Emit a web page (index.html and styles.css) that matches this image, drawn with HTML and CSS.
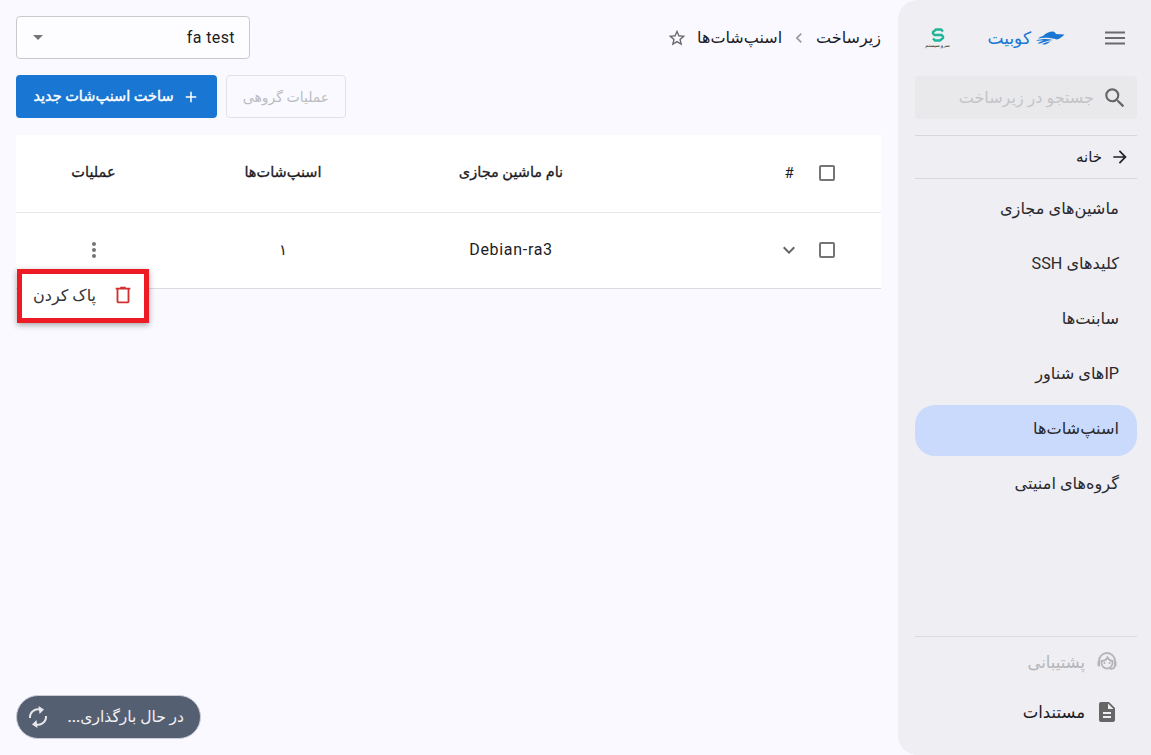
FILE: index.html
```html
<!DOCTYPE html>
<html dir="rtl">
<head>
<meta charset="utf-8">
<meta name="viewport" content="width=device-width, initial-scale=1">
<link rel="stylesheet" href="styles.css">
</head>
<body>

<div class="page">
  <aside class="sidebar">
    <div class="brand-row">
      <svg class="burger" width="20" height="14" viewBox="0 0 20 14"><path d="M0 1.500h20M0 7h20M0 12.500h20" stroke="#6b6b6f" stroke-width="2"/></svg>
      <div class="brand">
        <svg width="30" height="14" viewBox="0 0 30 14"><path d="M8 5C11 2 14 .5 18 .5c1.500 0 2 1 3 2.500l8.500 .5C27 6 25 7.500 22 8.500 16 6.500 9 6 3 7.500 4 6.500 6 5.500 8 5z" fill="#1976d2"/><path d="M1 9.500c6-2 12-2 17-.5-5 .5-10 2-13 3.500H2.500C4 11 7 10 9 9.500 6 9.500 3 10 1 9.500zM7 13c3-1.500 6-2.500 9-3-2 1.500-4 3-6 3.500-1 0-2 0-3-.5z" fill="#1976d2"/></svg>
        <span>کوبیت</span>
      </div>
      <div class="partner">
        <svg width="14" height="14" viewBox="0 0 14 14"><path d="M12 3.500L10 1.500H5L2 4v1.500L3.500 7h7L12 8.500V10l-3 2.500H4L2 10.500" fill="none" stroke="#1fb596" stroke-width="2.400"/></svg>
        <span>سرو سیستم</span>
      </div>
    </div>

    <div class="search">
      <svg width="26" height="26" viewBox="0 0 24 24"><path fill="#666" d="M15.500 14h-.79l-.28-.27A6.470 6.470 0 0 0 16 9.500 6.500 6.500 0 1 0 9.500 16c1.610 0 3.090-.59 4.230-1.570l.27.28v.79l5 4.990L20.490 19l-4.990-5zm-6 0C7.010 14 5 11.990 5 9.500S7.010 5 9.500 5 14 7.010 14 9.500 11.990 14 9.500 14z"/></svg>
      <span>جستجو در زیرساخت</span>
    </div>

    <div class="home">
      <svg width="20" height="20" viewBox="0 0 24 24"><path fill="#222" d="M12 4l-1.410 1.410L16.170 11H4v2h12.170l-5.580 5.590L12 20l8-8z"/></svg>
      <span>خانه</span>
    </div>

    <nav class="nav">
      <a class="nav-item">ماشین‌های مجازی</a>
      <a class="nav-item">کلیدهای SSH</a>
      <a class="nav-item">سابنت‌ها</a>
      <a class="nav-item">IPهای شناور</a>
      <a class="nav-item active">اسنپ‌شات‌ها</a>
      <a class="nav-item">گروه‌های امنیتی</a>
    </nav>

    <div class="side-foot">
      <div class="foot-item muted">
        <svg width="24" height="24" viewBox="0 0 24 24"><path fill="none" stroke="#b5b5b8" stroke-width="1.800" d="M4 14v-3a8 8 0 0 1 16 0v3M6.500 11c3 0 5-1.500 6-3.500 1 1.800 3 3.500 5 3.500v2a5.500 5.500 0 0 1-11 0zM20 15c0 2.500-2 4-5 4"/><circle cx="9.500" cy="13" r="1" fill="#b5b5b8"/><circle cx="14.500" cy="13" r="1" fill="#b5b5b8"/><path fill="#b5b5b8" d="M2.500 11.500H5v5H3.500l-1-1zM21.500 11.500H19v5h1.500l1-1z"/></svg>
        <span>پشتیبانی</span>
      </div>
      <div class="foot-item">
        <svg width="24" height="24" viewBox="0 0 24 24"><path fill="#666" d="M14 2H6c-1.100 0-2 .9-2 2v16c0 1.100.9 2 2 2h12c1.100 0 2-.9 2-2V8l-6-6zm2 16H8v-2h8v2zm0-4H8v-2h8v2zm-3-5V3.500L18.500 9H13z"/></svg>
        <span>مستندات</span>
      </div>
    </div>
  </aside>

  <main class="main">
    <div class="top-row">
      <div class="crumbs">
        <span>زیرساخت</span>
        <svg width="20" height="20" viewBox="0 0 24 24"><path fill="#9a9a9a" d="M15.410 7.410L14 6l-6 6 6 6 1.410-1.410L10.830 12z"/></svg>
        <span>اسنپ‌شات‌ها</span>
        <svg class="star" width="20" height="20" viewBox="0 0 24 24"><path fill="#666" d="M22 9.240l-7.190-.62L12 2 9.190 8.630 2 9.240l5.460 4.730L5.820 21 12 17.270 18.180 21l-1.630-7.030L22 9.240zM12 15.400l-3.760 2.270 1-4.280-3.320-2.880 4.380-.38L12 6.100l1.710 4.040 4.380.38-3.320 2.880 1 4.280L12 15.400z"/></svg>
      </div>
      <div class="select">
        <span>fa test</span>
        <i class="caret"></i>
      </div>
    </div>

    <div class="actions">
      <button class="btn btn-ghost">عملیات گروهی</button>
      <button class="btn btn-primary">
        <svg width="18" height="18" viewBox="0 0 24 24"><path fill="#fff" d="M19 13h-6v6h-2v-6H5v-2h6V5h2v6h6v2z"/></svg>
        ساخت اسنپ‌شات جدید
      </button>
    </div>

    <div class="table">
      <div class="tr th">
        <div class="c-check"><i class="check"></i></div>
        <div class="c-hash">#</div>
        <div class="c-name"><span class="head-text">نام ماشین مجازی</span></div>
        <div class="c-count"><span class="head-text">اسنپ‌شات‌ها</span></div>
        <div class="c-ops"><span class="head-text">عملیات</span></div>
      </div>
      <div class="tr">
        <div class="c-check"><i class="check"></i></div>
        <div class="c-hash">
          <svg width="24" height="24" viewBox="0 0 24 24"><path fill="#666" d="M16.590 8.590L12 13.170 7.410 8.590 6 10l6 6 6-6z"/></svg>
        </div>
        <div class="c-name cell latin">Debian-ra3</div>
        <div class="c-count cell">۱</div>
        <div class="c-ops">
          <svg width="24" height="24" viewBox="0 0 24 24"><path fill="#757575" d="M12 8c1.100 0 2-.9 2-2s-.9-2-2-2-2 .9-2 2 .9 2 2 2zm0 2c-1.100 0-2 .9-2 2s.9 2 2 2 2-.9 2-2-.9-2-2-2zm0 6c-1.100 0-2 .9-2 2s.9 2 2 2 2-.9 2-2-.9-2-2-2z"/></svg>
        </div>
      </div>
    </div>

    <div class="menu">
      <svg width="22" height="22" viewBox="0 0 24 24"><path fill="#d32f2f" d="M15 4V3H9v1H4v2h1v13c0 1.100.9 2 2 2h10c1.100 0 2-.9 2-2V6h1V4h-5zm2 15H7V6h10v13z"/></svg>
      <span>پاک کردن</span>
    </div>

    <div class="toast">
      <span>در حال بارگذاری...</span>
      <svg width="24" height="24" viewBox="0 0 24 24"><path fill="none" stroke="#e8e8ea" stroke-width="2" d="M4 13a8 8 0 0 1 10-8.500M20 11a8 8 0 0 1-10 8.500"/><path fill="#e8e8ea" d="M12.500 1l5.500 3.500-4.500 4.500zM11.500 23L6 19.500l4.500-4.500z"/></svg>
    </div>
  </main>
</div>

</body>
</html>
```

FILE: styles.css
```css
* {
  box-sizing: border-box;
}

html, body {
  margin: 0;
  height: 100%;
}

body {
  background-color: #f9f9ff;
  color: #1c1b1f;
  font-family: "Roboto", "DejaVu Sans", sans-serif;
  font-size: 16px;
  overflow: hidden;
}

.page {
  display: flex;
  height: 755px;
}

/* sidebar */

.sidebar {
  width: 253px;
  flex: none;
  display: flex;
  flex-direction: column;
  background-color: #eeeef3;
  border-top-left-radius: 20px;
  border-bottom-left-radius: 20px;
  padding: 0 14px 0 17px;
}

.brand-row {
  display: flex;
  align-items: center;
  height: 76px;
  padding-right: 12px;
}

.brand {
  display: flex;
  align-items: center;
  gap: 4px;
  margin-right: 40px;
  color: #1976d2;
  font-size: 17px;
  font-weight: 500;
}

.partner {
  display: flex;
  flex-direction: column;
  align-items: center;
  width: 24px;
  margin-right: 38px;
  color: #222;
  font-size: 4.800px;
  line-height: 7px;
  white-space: nowrap;
}

.search {
  display: flex;
  align-items: center;
  gap: 8px;
  height: 43px;
  padding: 0 9px;
  background-color: #e9e9ec;
  border-radius: 4px;
  color: #c4c4c7;
  font-size: 16px;
}

.home {
  display: flex;
  align-items: center;
  gap: 8px;
  height: 44px;
  margin-top: 16px;
  padding-right: 7px;
  border-top: 1px solid #d8d8dc;
  border-bottom: 1px solid #d8d8dc;
  font-size: 15px;
}

.nav {
  display: flex;
  flex-direction: column;
  gap: 4px;
  margin-top: 6px;
}

.nav-item {
  display: flex;
  align-items: center;
  height: 51px;
  padding: 0 18px 4px 0;
  border-radius: 20px;
  font-size: 16.200px;
  color: #2a2a2e;
}

.nav-item.active {
  background-color: #c9dafc;
}

.side-foot {
  margin-top: auto;
  margin-bottom: 18px;
  border-top: 1px solid #dcdce0;
}

.foot-item {
  display: flex;
  align-items: center;
  gap: 10px;
  height: 50px;
  padding-right: 18px;
  font-size: 16.500px;
}

.foot-item.muted {
  color: #b5b5b8;
}

/* main */

.main {
  flex: 1;
  min-width: 0;
  padding: 16px 17px 16px 16px;
  position: relative;
}

.top-row {
  display: flex;
  align-items: center;
  justify-content: space-between;
  height: 43px;
}

.crumbs {
  display: flex;
  align-items: center;
  gap: 7px;
  font-size: 16px;
}

.star {
  margin-right: 3px;
}

.select {
  display: flex;
  align-items: center;
  justify-content: space-between;
  width: 234px;
  height: 43px;
  padding: 0 14px 0 16px;
  background-color: #fdfdff;
  border: 1px solid #c9c9ce;
  border-radius: 4px;
  font-size: 16px;
  letter-spacing: 0.4px;
}

.caret {
  width: 0;
  height: 0;
  border-left: 5px solid transparent;
  border-right: 5px solid transparent;
  border-top: 5px solid #757575;
}

.actions {
  display: flex;
  gap: 9px;
  margin-top: 16px;
  justify-content: flex-end;
}

.btn {
  display: flex;
  align-items: center;
  justify-content: center;
  height: 43px;
  border-radius: 4px;
  font-family: inherit;
  font-size: 14px;
}

.btn-primary {
  width: 201px;
  gap: 8px;
  background-color: #1976d2;
  border: none;
  color: #fff;
  font-size: 14.500px;
  -webkit-text-stroke: 0.4px #fff;
}

.btn-ghost {
  width: 120px;
  background: none;
  border: 1px solid #e2e2e6;
  color: #bdbdc1;
}

.table {
  margin-top: 17px;
  background-color: #fff;
  border-bottom: 1px solid #dcdce0;
}

.tr {
  display: flex;
  align-items: center;
  height: 75px;
  padding-bottom: 2px;
  font-size: 14.500px;
}

.th {
  height: 78px;
  padding-bottom: 1px;
  border-bottom: 1px solid #e6e6ea;
}

.head-text {
  position: relative;
  top: -1px;
  -webkit-text-stroke: 0.3px #1c1b1f;
}

.c-check {
  width: 72px;
  padding-right: 36px;
  display: flex;
  justify-content: center;
}

.check {
  display: block;
  flex: none;
  width: 16px;
  height: 16px;
  border: 2px solid #757575;
  border-radius: 2px;
}

.c-hash {
  width: 40px;
  display: flex;
  justify-content: center;
  font-size: 15px;
}

.c-name {
  width: 232px;
  margin-right: auto;
  text-align: center;
}

.cell {
  font-size: 15px;
}

.latin {
  font-size: 16px;
  letter-spacing: 0.7px;
}

.c-count {
  width: 224px;
  text-align: center;
}

.c-ops {
  width: 155px;
  display: flex;
  justify-content: center;
}

/* delete menu and loading toast lie over the page */

.menu {
  position: absolute;
  left: 17px;
  top: 269px;
  width: 132px;
  height: 54px;
  display: flex;
  align-items: center;
  gap: 16px;
  padding: 0 10px 2px 0;
  background-color: #fff;
  border: 5px solid #ed1c24;
  box-shadow: 0 2px 6px rgba(0, 0, 0, 0.35);
  font-size: 16px;
  color: #333;
}

.toast {
  position: absolute;
  left: 16px;
  bottom: 16px;
  width: 185px;
  height: 44px;
  display: flex;
  align-items: center;
  justify-content: space-between;
  padding: 0 16px 0 9px;
  background-color: #555f72;
  border: 1px solid #c9ccd4;
  border-radius: 22px;
  color: #f2f2f4;
  font-size: 15.500px;
  font-weight: 500;
}
```
